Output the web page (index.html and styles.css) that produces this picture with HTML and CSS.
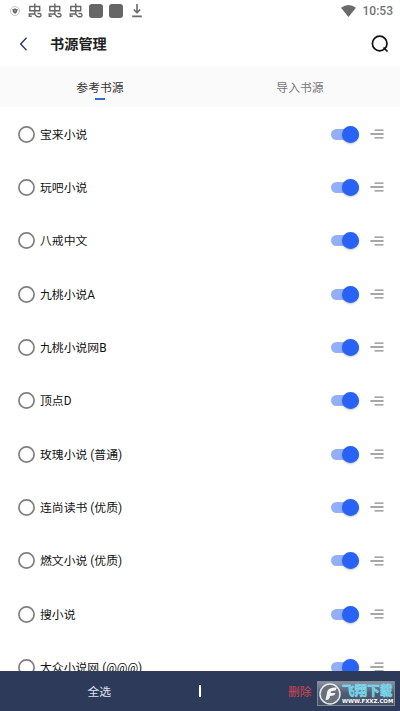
FILE: index.html
```html
<!DOCTYPE html>
<html lang="zh-CN">
<head>
<meta charset="utf-8">
<title>书源管理</title>
<link rel="stylesheet" href="styles.css">
</head>
<body>
<svg class="defs" aria-hidden="true">
  <symbol id="bug" viewBox="0 0 14 15">
    <path d="M1.800 3.500h9.900v4.300H1.800zM6.800.4v10.300M.5 11h5.500c1.800 0 1.800 2.700 3.600 2.700h2.200c1.800 0 1.500-3.200-.4-3.200H9.500M1.300 11v2.300h2.500"/>
  </symbol>
  <symbol id="lines" viewBox="0 0 14 10">
    <path d="M4.500 1.200h9M.3 5h13.200M4.500 8.900h9"/>
  </symbol>
</svg>
<div class="screen">
  <div class="status">
    <svg class="shield" viewBox="0 0 10 10"><circle cx="5" cy="5" r="4.500" fill="#fff" stroke="#bbb" stroke-width=".8"/><path d="M2.300 3.200Q4 3.200 5 2.300 6 3.200 7.700 3.200 7.700 6.500 5 8 2.300 6.500 2.300 3.200z" fill="#666"/><path d="M4 4.200h2L5 6z" fill="#bbb"/></svg>
    <svg class="bug"><use href="#bug"/></svg>
    <svg class="bug"><use href="#bug"/></svg>
    <svg class="bug"><use href="#bug"/></svg>
    <i class="block"></i>
    <i class="block"></i>
    <svg class="download" viewBox="0 0 10 14"><path d="M5 0v8M1.800 5.500L5 8.700l3.200-3.200M.2 12.400h9.600" fill="none" stroke="#6a6a6a" stroke-width="1.600"/></svg>
    <svg class="wifi" viewBox="0 0 15 12"><path d="M0 2.800Q7.500-2.600 15 2.800L7.500 12z" fill="#6a6a6a"/></svg>
    <span class="time">10:53</span>
  </div>
  <header class="header">
    <svg class="back" viewBox="0 0 8 14"><path d="M7 .8L1.200 7 7 13.200" fill="none" stroke="#34405f" stroke-width="1.500"/></svg>
    <h1>书源管理</h1>
    <svg class="search" viewBox="0 0 18 18"><circle cx="8.700" cy="8.500" r="7.300"/><path d="M12.500 12.500l4 4"/></svg>
  </header>
  <nav class="tabs">
    <div class="tab active">参考书源</div>
    <div class="tab">导入书源</div>
  </nav>
  <main class="list">
    <div class="row"><svg class="radio"><circle cx="8.500" cy="8.500" r="7.600"/></svg><span>宝来小说</span><i class="switch"></i><svg class="lines"><use href="#lines"/></svg></div>
    <div class="row"><svg class="radio"><circle cx="8.500" cy="8.500" r="7.600"/></svg><span>玩吧小说</span><i class="switch"></i><svg class="lines"><use href="#lines"/></svg></div>
    <div class="row"><svg class="radio"><circle cx="8.500" cy="8.500" r="7.600"/></svg><span>八戒中文</span><i class="switch"></i><svg class="lines"><use href="#lines"/></svg></div>
    <div class="row"><svg class="radio"><circle cx="8.500" cy="8.500" r="7.600"/></svg><span>九桃小说A</span><i class="switch"></i><svg class="lines"><use href="#lines"/></svg></div>
    <div class="row"><svg class="radio"><circle cx="8.500" cy="8.500" r="7.600"/></svg><span>九桃小说网B</span><i class="switch"></i><svg class="lines"><use href="#lines"/></svg></div>
    <div class="row"><svg class="radio"><circle cx="8.500" cy="8.500" r="7.600"/></svg><span>顶点D</span><i class="switch"></i><svg class="lines"><use href="#lines"/></svg></div>
    <div class="row"><svg class="radio"><circle cx="8.500" cy="8.500" r="7.600"/></svg><span>玫瑰小说 (普通)</span><i class="switch"></i><svg class="lines"><use href="#lines"/></svg></div>
    <div class="row"><svg class="radio"><circle cx="8.500" cy="8.500" r="7.600"/></svg><span>连尚读书 (优质)</span><i class="switch"></i><svg class="lines"><use href="#lines"/></svg></div>
    <div class="row"><svg class="radio"><circle cx="8.500" cy="8.500" r="7.600"/></svg><span>燃文小说 (优质)</span><i class="switch"></i><svg class="lines"><use href="#lines"/></svg></div>
    <div class="row"><svg class="radio"><circle cx="8.500" cy="8.500" r="7.600"/></svg><span>搜小说</span><i class="switch"></i><svg class="lines"><use href="#lines"/></svg></div>
    <div class="row"><svg class="radio"><circle cx="8.500" cy="8.500" r="7.600"/></svg><span>大众小说网 (@@@)</span><i class="switch"></i><svg class="lines"><use href="#lines"/></svg></div>
  </main>
  <footer class="footer">
    <div class="action">全选</div>
    <i class="divider"></i>
    <div class="action delete">删除</div>
  </footer>
  <div class="watermark">
    <svg class="mark-logo" viewBox="0 0 22 22"><circle cx="11" cy="11" r="10" fill="#69717c" stroke="#e8eaee" stroke-width="1.500"/><path d="M18 4.500C11 4.500 8.500 6 8 10l-1.500 7c3 0 4-1 4.500-4 3.500 0 5-1 5.500-3h-5c.3-2 2-2.300 5-2.500z" fill="#f2f3f5"/></svg>
    <div class="mark-text"><b>飞翔下载</b><small>WWW.FXXZ.COM</small></div>
  </div>
</div>
</body>
</html>
```
FILE: styles.css
```css
* { box-sizing: border-box; }
body {
  margin: 0;
  background: #fff;
  font-family: Roboto, "Noto Sans CJK SC", sans-serif;
  font-size: 11.850px;
  color: #111;
}
.defs { position: absolute; width: 0; height: 0; }
svg, i { display: block; flex: none; }
.screen {
  position: relative;
  width: 400px;
  height: 711px;
  overflow: hidden;
  display: flex;
  flex-direction: column;
}
.status {
  height: 21px;
  flex: none;
  display: flex;
  align-items: center;
  padding: 0 7px 0 10px;
}
.shield { width: 10px; height: 10px; margin-right: 8px; }
.bug {
  width: 14px;
  height: 15px;
  margin-right: 6.300px;
  fill: none;
  stroke: #666;
  stroke-width: 1.400;
}
.block { width: 14px; height: 14px; margin-right: 6.400px; border-radius: 3px; background: #666; }
.download { width: 10px; height: 14px; margin-left: 2px; }
.wifi { width: 15px; height: 12px; margin-left: auto; margin-right: 7px; }
.time { font-size: 12px; font-weight: 500; color: #737373; }
.header {
  height: 46px;
  flex: none;
  display: flex;
  align-items: center;
  padding: 0 11px 0 19px;
}
.back { width: 9px; height: 14px; }
.header h1 { margin: 0 auto 0 22px; font-size: 14.200px; font-weight: 700; line-height: 20px; color: #222; }
.search { width: 18px; height: 18px; fill: none; stroke: #111; stroke-width: 1.700; }
.tabs { height: 40px; flex: none; display: flex; background: #fafafa; }
.tab {
  flex: 1;
  display: flex;
  align-items: center;
  justify-content: center;
  color: #777;
  padding-bottom: 1px;
}
.active { position: relative; color: #333; }
.active::after {
  content: "";
  position: absolute;
  left: 95px;
  top: 31px;
  width: 10px;
  height: 1.500px;
  background: #3b69d6;
}
.list { flex: 1; min-height: 0; overflow: hidden; padding-top: .4px; }
.row {
  height: 53.330px;
  display: flex;
  align-items: center;
  padding: 0 16px 0 18px;
}
.row span { margin-left: 5px; margin-right: auto; line-height: 18px; padding-top: 1px; white-space: pre; }
.radio { width: 17px; height: 17px; fill: none; stroke: #808080; stroke-width: 1.700; }
.switch {
  position: relative;
  width: 28px;
  height: 11px;
  margin-right: 11px;
  border-radius: 6px;
  background: #94affa;
}
.switch::after {
  content: "";
  position: absolute;
  right: .5px;
  top: -3px;
  width: 17px;
  height: 17px;
  border-radius: 50%;
  background: #2962f6;
  box-shadow: 0 1px 2px rgba(0, 0, 0, .25);
}
.lines { width: 14px; height: 10px; fill: none; stroke: #8a8a8a; stroke-width: 1.300; }
.footer {
  height: 40px;
  flex: none;
  display: flex;
  align-items: center;
  background: #2e3a5a;
  color: #dfe3ec;
}
.action { flex: 1; text-align: center; padding-bottom: 2px; }
.delete { color: #d64550; padding-right: 1px; }
.divider { width: 2px; height: 12px; background: #fff; }
.watermark {
  position: absolute;
  left: 317px;
  top: 681px;
  width: 78px;
  height: 25px;
  display: flex;
  align-items: center;
  background: linear-gradient(#8791a0, #4f5b70 50%, #445066);
  border: 1px solid #7c8798;
}
.mark-logo { width: 22px; height: 22px; margin-left: 1px; }
.mark-text { display: flex; flex-direction: column; margin-left: 1px; }
.mark-text b {
  font-size: 12.600px;
  line-height: 15px;
  font-weight: 900;
  color: #62cfe9;
  -webkit-text-stroke: .3px #a5e9f5;
}
.mark-text small {
  font: 700 5.400px/7px "DejaVu Sans", sans-serif;
  color: #fff;
  white-space: nowrap;
}
```
